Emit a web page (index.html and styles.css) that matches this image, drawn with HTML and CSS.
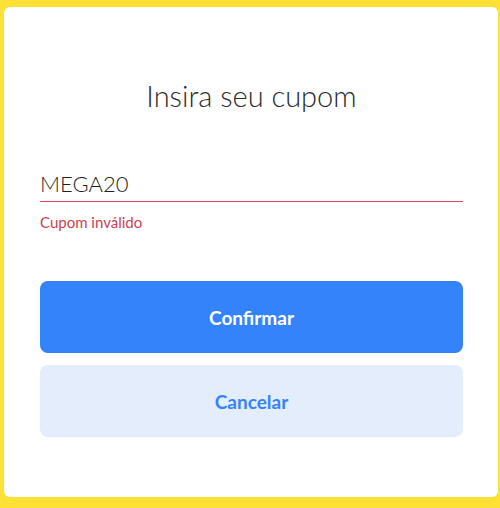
FILE: index.html
```html
<!DOCTYPE html>
<html lang="pt-BR">
<head>
<meta charset="utf-8">
<title>Insira seu cupom</title>
<link rel="stylesheet" href="styles.css">
</head>
<body>
<div class="frame">
  <div class="card">
    <h1 class="title">Insira seu cupom</h1>
    <div class="field">
      <input class="field-input" type="text" value="MEGA20">
      <div class="field-line"></div>
      <div class="field-error">Cupom inválido</div>
    </div>
    <div class="actions">
      <button class="btn btn-primary">Confirmar</button>
      <button class="btn btn-secondary">Cancelar</button>
    </div>
  </div>
</div>
</body>
</html>
```

FILE: styles.css
```css
html, body {
  margin: 0;
  padding: 0;
}
body {
  font-family: "Lato", "Open Sans", sans-serif;
  background: #ffe135;
}
.frame {
  height: 508px;
  padding: 7px 2px 11px 4px;
  box-sizing: border-box;
  display: flex;
}
.card {
  flex: 1;
  background: #ffffff;
  border-radius: 6px;
  padding: 72px 35px 0 36px;
  display: flex;
  flex-direction: column;
}
.title {
  margin: 0;
  font-size: 29px;
  line-height: 34px;
  font-weight: 300;
  color: #2b2b2b;
  text-align: center;
}
.field {
  margin-top: 57px;
  display: flex;
  flex-direction: column;
}
.field-input {
  display: block;
  font-family: "Lato", "Open Sans", sans-serif;
  font-size: 22px;
  font-weight: 300;
  line-height: 26px;
  height: 31px;
  color: #1f1f1f;
  border: none;
  padding: 0 0 5px 0;
  margin: 0;
  outline: none;
  background: transparent;
  width: 100%;
  box-sizing: border-box;
}
.field-line {
  height: 1px;
  background: #e0465a;
}
.field-error {
  margin-top: 11px;
  font-size: 15px;
  line-height: 18px;
  color: #c9434f;
}
.actions {
  margin-top: 50px;
  display: flex;
  flex-direction: column;
  gap: 12px;
}
.btn {
  height: 72px;
  border: none;
  border-radius: 8px;
  font-family: inherit;
  font-size: 19px;
  font-weight: 700;
  cursor: pointer;
}
.btn-primary {
  background: #3483fa;
  color: #ffffff;
}
.btn-secondary {
  background: #e3edfb;
  color: #3483fa;
}
```
